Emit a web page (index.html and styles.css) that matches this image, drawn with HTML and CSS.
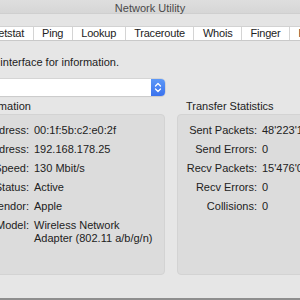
FILE: index.html
```html
<!DOCTYPE html>
<html lang="en">
<head>
    <meta charset="UTF-8">
    <meta name="viewport" content="width=device-width, initial-scale=1.0">
    <title>Network Utility</title>
    <link rel="stylesheet" href="styles.css">
</head>
<body>

    <div class="window">
        <div class="titlebar">Network Utility</div>

        <!-- Tab strip -->
        <div class="toolbar">
            <div class="tabs">
                <div class="tab active">Info</div>
                <div class="tab">Netstat</div>
                <div class="tab">Ping</div>
                <div class="tab">Lookup</div>
                <div class="tab">Traceroute</div>
                <div class="tab">Whois</div>
                <div class="tab">Finger</div>
                <div class="tab">Port Scan</div>
            </div>
        </div>

        <div class="content">
            <p class="prompt">Select a network interface for information.</p>

            <div class="popup">
                <span class="popup-field"></span>
                <span class="popup-button">
                    <svg width="14" height="17" viewBox="0 0 14 17">
                        <path d="M4.5 7 L7 4.5 L9.5 7 M4.5 10 L7 12.5 L9.5 10" fill="none" stroke="#fff" stroke-width="1.3" stroke-linecap="round" stroke-linejoin="round"/>
                    </svg>
                </span>
            </div>
            <div></div>

            <!-- Interface Information -->
            <section class="group group-info">
                <h3 class="group-title">Interface Information</h3>
                <div class="group-box">
                    <div class="row"><span class="label">Hardware Address:</span><span class="value">00:1f:5b:c2:e0:2f</span></div>
                    <div class="row"><span class="label">IP Address:</span><span class="value">192.168.178.25</span></div>
                    <div class="row"><span class="label">Link Speed:</span><span class="value">130 Mbit/s</span></div>
                    <div class="row"><span class="label">Link Status:</span><span class="value">Active</span></div>
                    <div class="row"><span class="label">Vendor:</span><span class="value">Apple</span></div>
                    <div class="row"><span class="label">Model:</span><span class="value">Wireless Network<br>Adapter (802.11 a/b/g/n)</span></div>
                </div>
            </section>

            <!-- Transfer Statistics -->
            <section class="group group-stats">
                <h3 class="group-title">Transfer Statistics</h3>
                <div class="group-box">
                    <div class="row"><span class="label">Sent Packets:</span><span class="value">48'223'102</span></div>
                    <div class="row"><span class="label">Send Errors:</span><span class="value">0</span></div>
                    <div class="row"><span class="label">Recv Packets:</span><span class="value">15'476'031</span></div>
                    <div class="row"><span class="label">Recv Errors:</span><span class="value">0</span></div>
                    <div class="row"><span class="label">Collisions:</span><span class="value">0</span></div>
                </div>
            </section>
        </div>

        <div class="bottom-edge"></div>
    </div>

</body>
</html>
```

FILE: styles.css
```css
* {
    box-sizing: border-box;
    margin: 0;
    padding: 0;
}

body {
    font-family: "Liberation Sans", Arial, sans-serif;
    font-size: 11px;
    color: #222;
    background-color: #e6e6e6;
    overflow: hidden;
    height: 300px;
}

.window {
    width: 516px;
    margin-left: -108px;
}

.titlebar {
    height: 14px;
    line-height: 17px;
    text-align: center;
    color: #4a4a4a;
    background: linear-gradient(#dedede, #d6d6d6);
    border-bottom: 1px solid #cfcfcf;
}

.toolbar {
    padding-top: 12px;
    background-color: #e4e4e4;
}

.tabs {
    display: flex;
    justify-content: center;
    height: 15px;
    background-color: #fff;
    border-top: 1px solid #d2d2d2;
    border-bottom: 1px solid #c9c9c9;
}

.tab {
    padding: 0 8.5px;
    line-height: 13px;
    border-left: 1px solid #d4d4d4;
    letter-spacing: -0.2px;
}

.tab:first-child {
    border-left: none;
}

.content {
    display: grid;
    grid-template-columns: 246px 204px;
    column-gap: 12px;
    padding: 15px 27px 23px;
}

.prompt {
    grid-column: 1 / 3;
    line-height: 13px;
    margin: 0 0 10px -3px;
}

.popup {
    display: flex;
    height: 17px;
    border-radius: 4px;
    background-color: #fff;
    box-shadow: 0 0 0 0.5px #c4c4c4, 0 1px 1px rgba(0, 0, 0, 0.08);
}

.popup-field {
    flex: 1;
}

.popup-button {
    width: 14px;
    border-radius: 0 4px 4px 0;
    background: linear-gradient(#5d98f7, #3a72ee);
}

.popup-button svg {
    display: block;
}

.group {
    margin-top: 4px;
}

.group-title {
    font-size: 11px;
    font-weight: normal;
    line-height: 13px;
    padding-left: 9px;
    margin-bottom: 1px;
}

.group-info .group-title {
    padding-left: 11px;
}

.group-box {
    height: 161px;
    padding-top: 9px;
    background-color: #dcdcdc;
    border: 1px solid #d3d3d3;
    border-radius: 4px;
    display: flex;
    flex-direction: column;
    gap: 6px;
}

.row {
    display: grid;
    column-gap: 5px;
    line-height: 13px;
}

.group-info .row {
    grid-template-columns: 109px 1fr;
}

.group-stats .row {
    grid-template-columns: 79px 1fr;
}

.label {
    text-align: right;
    white-space: nowrap;
}

.value {
    white-space: nowrap;
}

.bottom-edge {
    height: 4px;
    border-top: 2px solid #8e8e8e;
}
```
